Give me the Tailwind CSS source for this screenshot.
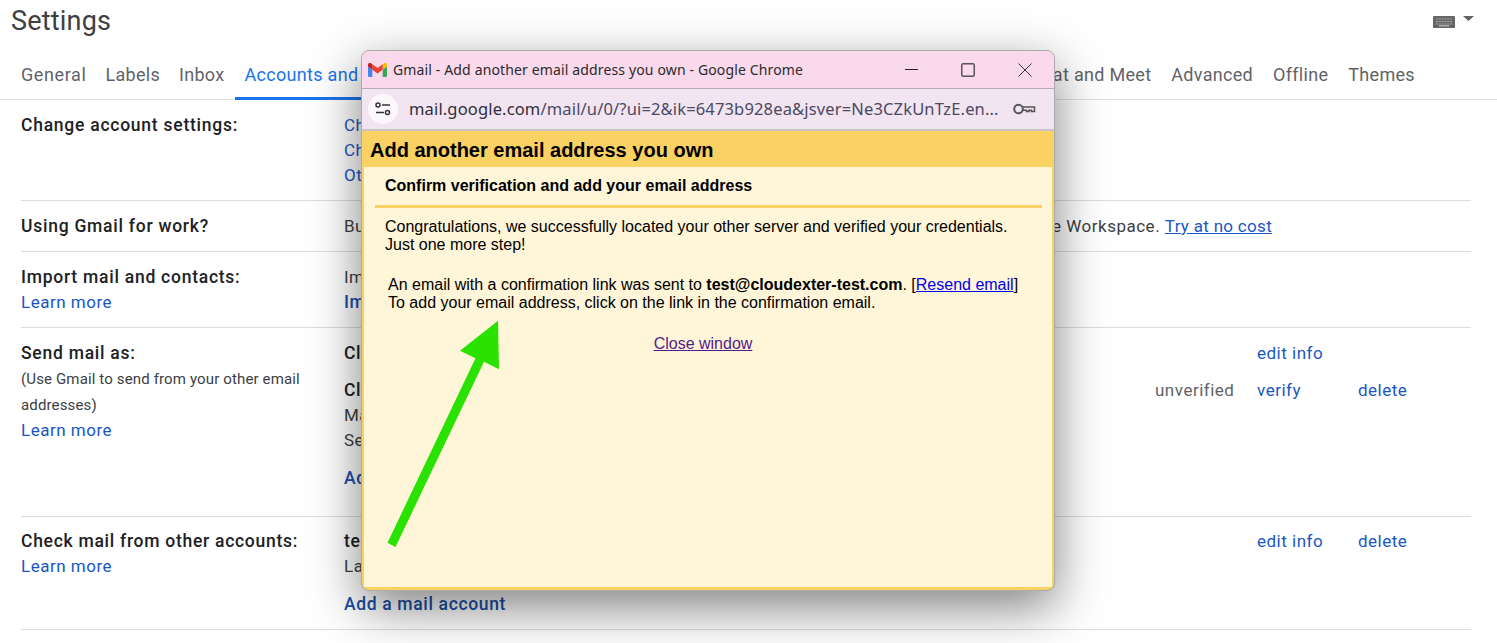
<!DOCTYPE html>
<html lang="en">
<head>
    <meta charset="UTF-8">
    <title>Settings - Gmail</title>
    <script src="https://cdn.jsdelivr.net/npm/@tailwindcss/browser@4"></script>
</head>
<body class="bg-white">
    <div class="relative h-[643px] w-[1497px] overflow-hidden font-['Roboto',sans-serif] text-[17px] tracking-[0.5px] text-[#3c4043]">
        <!-- settings header -->
        <div class="flex h-[50px] items-start justify-between pl-[11px] pr-[23px] pt-[3px]">
            <h1 class="text-[27px] leading-[36px] tracking-[0.2px] text-[#3c4043]">Settings</h1>
            <div class="flex items-start gap-2 pt-[13px]">
                <svg class="h-[12px] w-[22px]" viewBox="0 0 22 12"><rect width="22" height="12" rx="1" fill="#666"/><path d="M3 3H19M3 5.500H19M3 8H19" stroke="#aaa" stroke-width="1.200" stroke-dasharray="2 .8"/><rect x="6" y="9" width="10" height="1.500" fill="#aaa"/></svg>
                <svg class="h-[5px] w-[11px]" viewBox="0 0 11 5"><path d="M0 0h11L5.500 5z" fill="#5f6368"/></svg>
            </div>
        </div>

        <!-- tabs -->
        <div class="flex h-[50px] items-start border-b border-[#e0e0e0] pl-[11px] text-[18px] tracking-[0.3px] text-[#5f6368]">
            <span class="pl-[10px] pr-[9px] pt-[11px] tracking-[0.6px]">General</span>
            <span class="pl-[10px] pr-[9px] pt-[11px]">Labels</span>
            <span class="px-[10px] pt-[11px]">Inbox</span>
            <span class="h-[50px] border-b-[3px] border-[#1a73e8] px-[10px] pt-[11px] text-[#1a73e8]">Accounts and Import</span>
            <span class="px-[10px] pt-[11px]">Filters and Blocked Addresses</span>
            <span class="pl-[5px] pr-[6px] pt-[11px]">Forwarding and POP/IMAP</span>
            <span class="px-[10px] pt-[11px]">Add-ons</span>
            <span class="px-[10px] pt-[11px]">Chat and Meet</span>
            <span class="px-[10px] pt-[11px]">Advanced</span>
            <span class="px-[10px] pt-[11px]">Offline</span>
            <span class="px-[10px] pt-[11px]">Themes</span>
        </div>

        <!-- settings rows -->
        <div class="ml-[21px] w-[1450px]">
            <div class="flex h-[101px] border-b border-[#dcdcdc] pt-[13px] leading-[25px]">
                <div class="w-[323px] text-[17.500px] font-medium tracking-[0.75px] text-[#202124]">Change account settings:</div>
                <div class="flex flex-col text-[#1a56c4]">
                    <span>Change password</span>
                    <span>Change password recovery options</span>
                    <span>Other Google Account settings</span>
                </div>
            </div>
            <div class="flex h-[51px] border-b border-[#dcdcdc] pt-[13px] leading-[25px]">
                <div class="w-[323px] text-[17.500px] font-medium tracking-[0.75px] text-[#202124]">Using Gmail for work?</div>
                <div class="flex w-[928px] justify-between">
                    <span>Businesses can use Gmail</span>
                    <span>with Google Workspace. <span class="tracking-[0.3px] text-[#1a56c4] underline">Try at no cost</span></span>
                </div>
            </div>
            <div class="flex h-[76px] border-b border-[#dcdcdc] pt-[13px] leading-[25px]">
                <div class="flex w-[323px] flex-col">
                    <span class="text-[17.500px] font-medium tracking-[0.75px] text-[#202124]">Import mail and contacts:</span>
                    <span class="text-[#1a56c4]">Learn more</span>
                </div>
                <div class="flex flex-col">
                    <span>Import from Yahoo!</span>
                    <span class="text-[17.500px] font-medium tracking-[0.65px] text-[#1a4fa8]">Import mail and contacts</span>
                </div>
            </div>
            <div class="flex h-[189px] border-b border-[#dcdcdc] pt-[13px] leading-[25px]">
                <div class="flex w-[323px] flex-col">
                    <span class="text-[17.500px] font-medium tracking-[0.75px] text-[#202124]">Send mail as:</span>
                    <span class="w-[290px] text-[15px] leading-[26px] tracking-[0.14px]">(Use Gmail to send from your other email addresses)</span>
                    <span class="text-[#1a56c4]">Learn more</span>
                </div>
                <div class="flex flex-1 flex-col">
                    <div class="flex">
                        <span class="flex-1 text-[17.500px] font-medium tracking-[0.65px] text-[#202124]">Cloudexter</span>
                        <span class="w-[214px] text-[#1a56c4]">edit info</span>
                    </div>
                    <div class="mt-[12px] flex">
                        <span class="flex-1 text-[17.500px] font-medium tracking-[0.65px] text-[#202124]">Cloudexter test</span>
                        <span class="w-[102px] text-[#5f6368]">unverified</span>
                        <span class="w-[101px] text-[#1a56c4]">verify</span>
                        <span class="w-[113px] text-[#1a56c4]">delete</span>
                    </div>
                    <span>Mail is sent through</span>
                    <span>Secured connection</span>
                    <span class="mt-[13px] text-[17.500px] font-medium tracking-[0.65px] text-[#1a4fa8]">Add another email address</span>
                </div>
            </div>
            <div class="flex h-[113px] border-b border-[#dcdcdc] pt-[12px] leading-[25px]">
                <div class="flex w-[323px] flex-col">
                    <span class="text-[17.500px] font-medium tracking-[0.72px] text-[#202124]">Check mail from other accounts:</span>
                    <span class="text-[#1a56c4]">Learn more</span>
                </div>
                <div class="flex flex-1 flex-col">
                    <div class="flex">
                        <span class="flex-1 text-[17.500px] font-medium tracking-[0.65px] text-[#202124]">test@cloudexter-test.com</span>
                        <span class="w-[101px] text-[#1a56c4]">edit info</span>
                        <span class="w-[113px] text-[#1a56c4]">delete</span>
                    </div>
                    <span>Last checked: no mail</span>
                    <span class="mt-[13px] text-[17.500px] font-medium tracking-[0.65px] text-[#1a4fa8]">Add a mail account</span>
                </div>
            </div>
        </div>

        <!-- chrome popup window -->
        <div class="absolute left-[361px] top-[50px] flex h-[541px] w-[694px] flex-col overflow-hidden rounded-[8px] border border-[#ababab] bg-[#fad163] font-['Liberation_Sans',sans-serif] text-[16px] tracking-normal text-black shadow-[0_16px_50px_rgba(0,0,0,0.5)]">
            <div class="flex h-[38px] shrink-0 items-center border-b border-[#b5aeb3] bg-[#fad9ec] pl-[6px]">
                <svg class="h-[14px] w-[19px]" viewBox="0 0 19 14">
                    <path d="M1.300 14H4.300V6.700L0 3.500V12.700C0 13.400 .6 14 1.300 14Z" fill="#4285f4"/>
                    <path d="M14.700 14H17.700C18.400 14 19 13.400 19 12.700V3.500L14.700 6.700Z" fill="#34a853"/>
                    <path d="M14.700 1.200V6.700L19 3.500V1.700C19 .2 17.300-.7 16.100 .2Z" fill="#fbbc04"/>
                    <path d="M4.300 6.700V1.200L9.500 5.100L14.700 1.200V6.700L9.500 10.600Z" fill="#ea4335"/>
                    <path d="M0 1.700V3.500L4.300 6.700V1.200L2.900 .2C1.700-.7 0 .2 0 1.700Z" fill="#c5221f"/>
                </svg>
                <span class="ml-[6px] font-['Noto_Sans',sans-serif] text-[14px] tracking-[0.14px] text-[#2b2b2b]">Gmail - Add another email address you own - Google Chrome</span>
                <svg class="ml-auto h-[14px] w-[14px]" viewBox="0 0 14 14"><path d="M0 6.500H13" stroke="#222" stroke-width="1" fill="none"/></svg>
                <svg class="ml-[42px] h-[14px] w-[14px]" viewBox="0 0 14 14"><rect x=".75" y=".75" width="12.500" height="12.500" rx="1.500" stroke="#555" stroke-width="1.500" fill="none"/></svg>
                <svg class="ml-[43px] mr-[22px] h-[14px] w-[14px]" viewBox="0 0 14 14"><path d="M.5 .5L13.500 13.500M13.500 .5L.5 13.500" stroke="#333" stroke-width="1" fill="none"/></svg>
            </div>
            <div class="flex h-[42px] shrink-0 items-center border-b-2 border-[#c9c2c8] bg-[#f2e4f0] pl-[6px] pr-[18px]">
                <div class="flex h-[30px] w-[30px] items-center justify-center rounded-full bg-[#fcf7fb]">
                    <svg class="h-[14px] w-[16px]" viewBox="0 0 16 14" fill="none" stroke="#333" stroke-width="1.500"><circle cx="3" cy="3" r="2"/><path d="M7 3H15M1 10.500H9"/><circle cx="12.500" cy="10.500" r="2"/></svg>
                </div>
                <span class="ml-[11px] font-['Noto_Sans',sans-serif] text-[16.500px] tracking-[0.15px] text-[#4a4a63]"><span class="text-[#2f2f3a]">mail.google.com</span>/mail/u/0/?ui=2&amp;ik=6473b928ea&amp;jsver=Ne3CZkUnTzE.en...</span>
                <svg class="ml-auto h-[14px] w-[23px]" viewBox="0 0 23 14" fill="none" stroke="#555" stroke-width="2"><circle cx="5.500" cy="7" r="4.300"/><path d="M10 5H21.500V9.500H18.500V8.200H16V9.500H13.500V8.200H10" stroke-width="1.500"/></svg>
            </div>
            <div class="flex h-[36px] shrink-0 items-center pl-[8px] pt-[1px] text-[20px] font-bold leading-none">Add another email address you own</div>
            <div class="mx-[2px] mb-[3px] flex flex-1 flex-col bg-[#fff5d8]">
                <div class="ml-[11px] mr-[10px] h-[41px] border-b-[3px] border-[#fad163] pl-[10px] pt-[10px] font-bold leading-[18px]">Confirm verification and add your email address</div>
                <p class="ml-[21px] mt-[10px] w-[640px] leading-[18px]">Congratulations, we successfully located your other server and verified your credentials. Just one more step!</p>
                <p class="ml-[24px] mt-[22px] w-[650px] leading-[18px]">An email with a confirmation link was sent to <b>test@cloudexter-test.com</b>. [<span class="text-[#0000ee] underline">Resend email</span>]<br>To add your email address, click on the link in the confirmation email.</p>
                <div class="mt-[23px] pr-[10px] text-center leading-[18px] text-[#551a8b] underline">Close window</div>
            </div>
            <!-- green annotation arrow -->
            <svg class="absolute left-0 top-0" width="694" height="541" viewBox="0 0 694 541">
                <path d="M25.500 491.700L33.500 496L122 310.700L137 318.300L136 269.700L98 299.700L113.500 307.300Z" fill="#2ae200"/>
            </svg>
        </div>
    </div>
</body>
</html>
